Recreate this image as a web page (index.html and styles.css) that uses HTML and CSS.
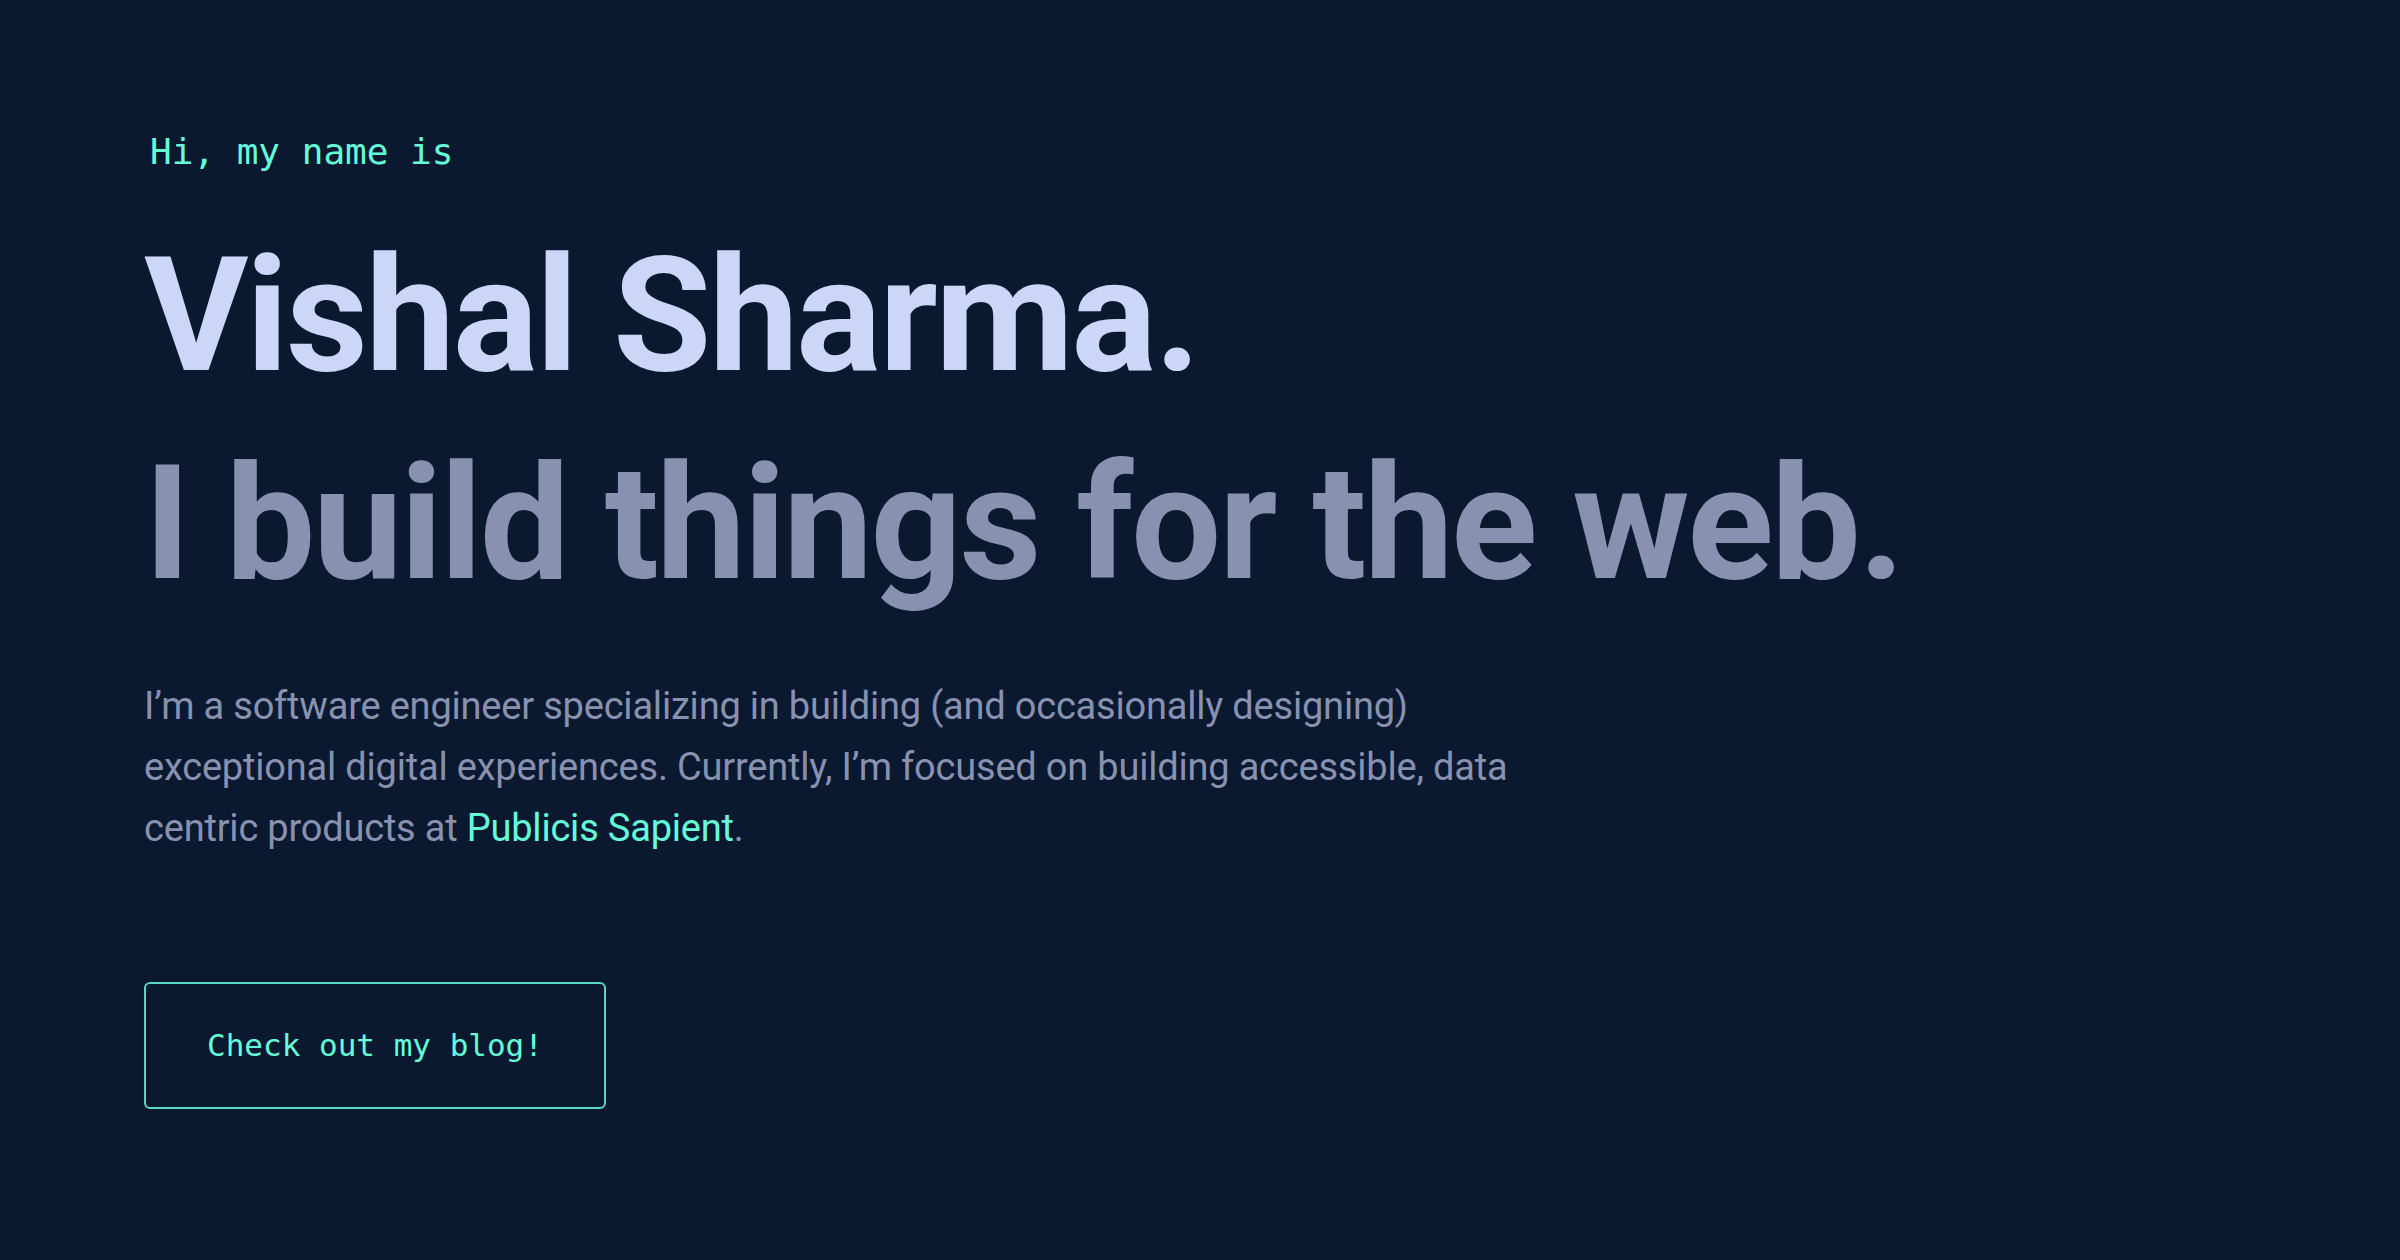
FILE: index.html
```html
<!DOCTYPE html>
<html lang="en">
<head>
<meta charset="utf-8">
<title>Vishal Sharma</title>
<link rel="stylesheet" href="styles.css">
</head>
<body>
<main class="hero">
  <h1 class="hero-intro">Hi, my name is</h1>
  <h2 class="big-heading name">Vishal Sharma.</h2>
  <h3 class="big-heading tagline">I build things for the web.</h3>
  <p class="hero-text">I’m a software engineer specializing in building (and occasionally designing) exceptional digital experiences. Currently, I’m focused on building accessible, data centric products at <a class="accent-link" href="#">Publicis Sapient</a>.</p>
  <a class="blog-button" href="#">Check out my blog!</a>
</main>
</body>
</html>
```

FILE: styles.css
```css
html, body {
  margin: 0;
  padding: 0;
  background: #0a192f;
  height: 100%;
}

body {
  overflow: hidden;
}

.hero {
  display: flex;
  flex-direction: column;
  align-items: flex-start;
  padding: 132px 0 0 144px;
  box-sizing: border-box;
  height: 1260px;
}

.hero-intro {
  margin: 0 0 40px 6px;
  font-family: "DejaVu Sans Mono", "Liberation Mono", monospace;
  font-weight: 400;
  font-size: 36px;
  line-height: 40px;
  color: #64ffda;
}

.big-heading {
  margin: 0;
  font-family: "Roboto", "Inter", sans-serif;
  font-weight: 700;
  font-size: 160px;
  line-height: 208px;
  letter-spacing: -2.5px;
}

.name {
  color: #ccd6f6;
}

.tagline {
  color: #8892b0;
}

.hero-text {
  margin: 48px 0 0 0;
  max-width: 1400px;
  font-family: "Roboto", "Liberation Sans", sans-serif;
  font-weight: 400;
  font-size: 38px;
  line-height: 61px;
  letter-spacing: -0.2px;
  color: #8892b0;
}

.accent-link {
  color: #64ffda;
  text-decoration: none;
}

.blog-button {
  margin-top: 123px;
  padding: 46px 61px;
  border: 2px solid #55d6c6;
  border-radius: 6px;
  font-family: "DejaVu Sans Mono", "Liberation Mono", monospace;
  font-size: 31px;
  line-height: 31px;
  color: #64ffda;
  text-decoration: none;
}
```
